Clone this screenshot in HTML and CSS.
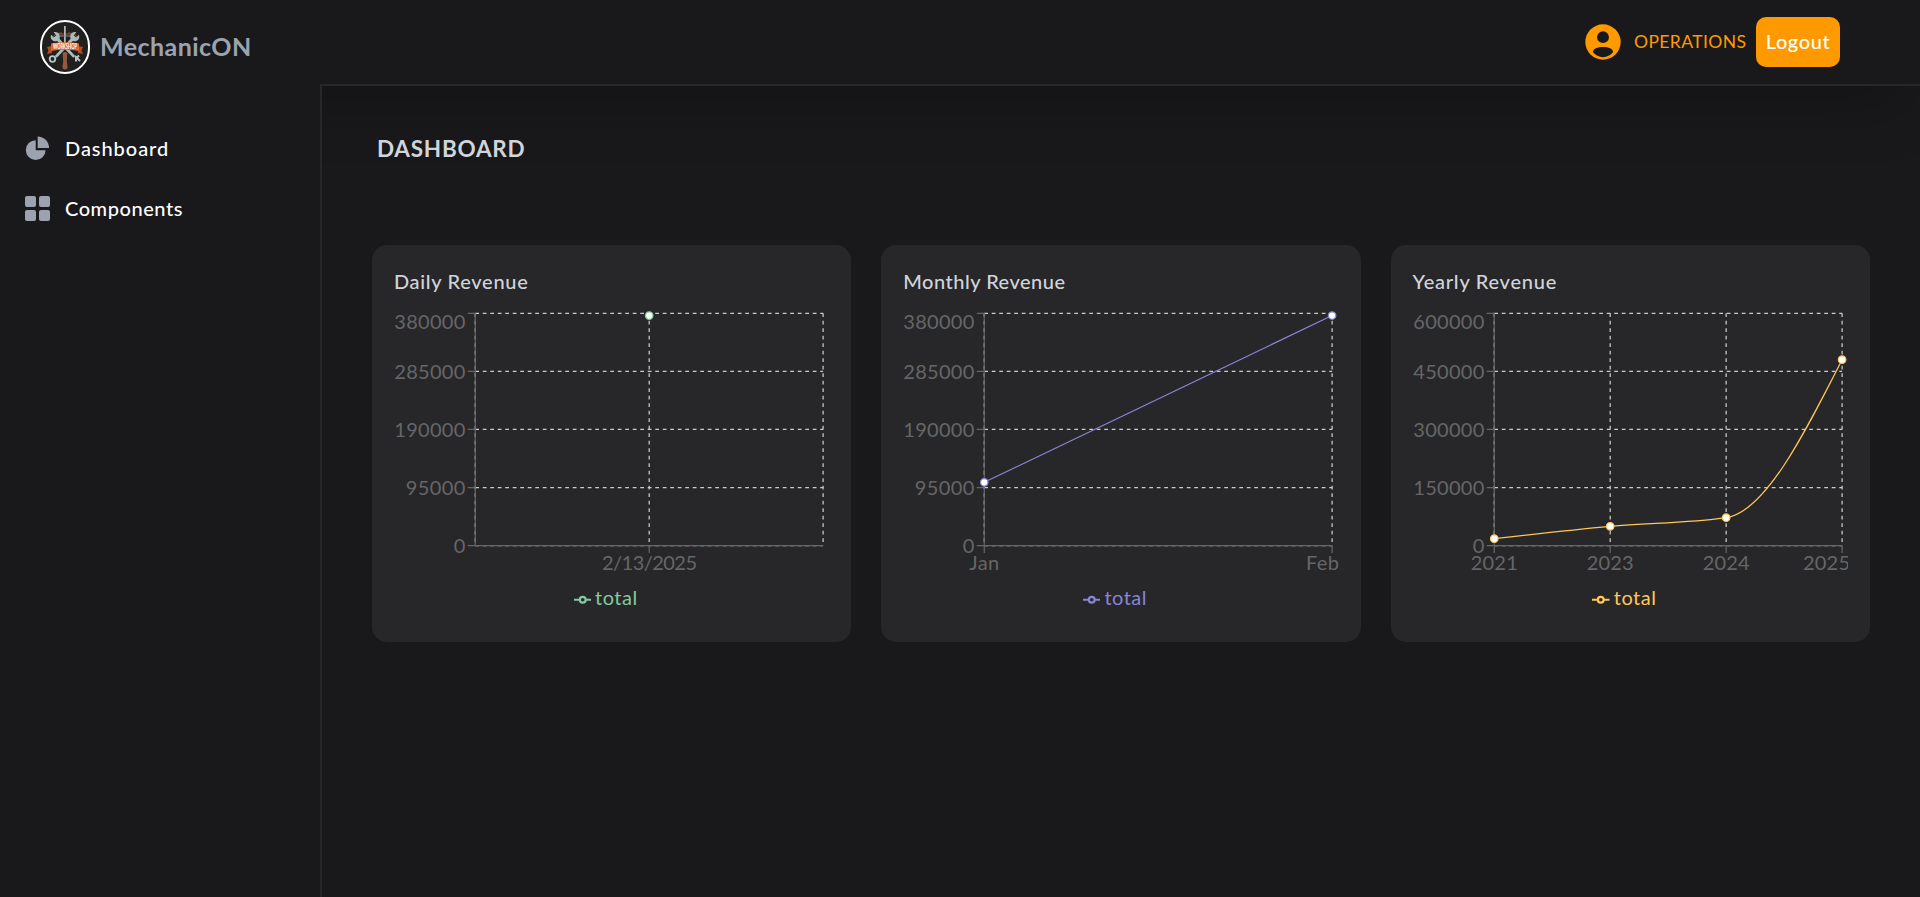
FILE: index.html
```html
<!DOCTYPE html>
<html lang="en">
<head>
<meta charset="utf-8">
<title>MechanicON</title>
<link rel="stylesheet" href="styles.css">
</head>
<body>
<svg class="defs" width="0" height="0">
  <defs>
    <g id="grid-rows">
      <path class="grid" d="M81.25 6.25H429.1M81.25 64.35H429.1M81.25 122.4H429.1M81.25 180.5H429.1M81.25 238.6H429.1"/>
      <path class="grid" d="M81.25 6.25V238.6M429.1 6.25V238.6"/>
    </g>
    <path id="axes" class="axis" d="M81.25 6.25V238.6M81.25 238.6H429.1M73.75 6.25h7.5M73.75 64.35h7.5M73.75 122.4h7.5M73.75 180.5h7.5M73.75 238.6h7.5"/>
    <path id="legend-mark" d="M0 16H10.667A5.333 5.333 0 1 1 21.333 16H32M21.333 16A5.333 5.333 0 1 1 10.667 16" fill="none" stroke="currentColor" stroke-width="4"/>
    <g id="wrench">
      <path d="M-1.6 -11.5L-1.4 13.5H1.4L1.6 -11.5Z"/>
      <path d="M-1.7 -18.5C-5.4 -17 -5.6 -11.8 -1.8 -10H1.8C5.6 -11.8 5.4 -17 1.7 -18.5V-14.6H-1.7Z"/>
    </g>
  </defs>
</svg>
<div class="layout">
  <header class="header">
    <div class="brand">
      <svg class="logo" viewBox="0 0 50 54">
        <rect x="1" y="1" width="48" height="52" rx="24" ry="25" fill="#20211f" stroke="#fff" stroke-width="2"/>
        <path d="M12 18q3 -5 10 -5M38 18q-3 -5 -10 -5M16 14h18" fill="none" stroke="#a4502d" stroke-width="1"/>
        <g fill="#a9bbbd">
          <use href="#wrench" transform="translate(25 27) rotate(-43)"/>
          <use href="#wrench" transform="translate(25 27) rotate(43)"/>
        </g>
        <circle cx="12.5" cy="39" r="2.8" fill="none" stroke="#b5c4c5" stroke-width="1.8"/>
        <path d="M35 36l5 5M36 41.500v-3l3 -3" fill="none" stroke="#b5c4c5" stroke-width="2"/>
        <path d="M24.100 6h1.600v18h-1.600z" fill="#c0c7c7"/>
        <path d="M20 16h10" stroke="#83908f" stroke-width="1"/>
        <path d="M22.600 33q2.400 -2 4.800 0l-.6 8l.8 7q-2.600 3 -5.200 0l.8 -7z" fill="#96583f"/>
        <path d="M7 27l5 -1v7l-5 1l1.500 -3.500zM43 27l-5 -1v7l5 1l-1.500 -3.500z" fill="#b64b20"/>
        <path d="M11 23.500q14 -2.500 28 0v7.500q-14 -2.500 -28 0z" fill="#dc6837"/>
        <text x="25" y="29.200" text-anchor="middle" textLength="24" lengthAdjust="spacingAndGlyphs" class="logo-text">WORKSHOP</text>
      </svg>
      <span class="brand-name">MechanicON</span>
    </div>
    <div class="user">
      <svg class="avatar" viewBox="0 0 36 36">
        <circle cx="18" cy="18" r="17.700" fill="#ff9900"/>
        <circle cx="18" cy="13.200" r="5.900" fill="#19191b"/>
        <path d="M8 28.300C8 24.500 12.500 23 18 23S28 24.500 28 28.300C25.500 31.300 22 33.200 18 33.200S10.500 31.300 8 28.300Z" fill="#19191b"/>
      </svg>
      <span class="role">OPERATIONS</span>
      <button class="logout">Logout</button>
    </div>
  </header>
  <nav class="sidebar">
    <a class="nav-item">
      <svg class="nav-icon" viewBox="0 0 25 25">
        <path d="M10.700 4.200V14.300H20.600A9.900 9.900 0 1 1 10.700 4.200Z" fill="#9ca3af"/>
        <path d="M12.700 .4A11.500 11.500 0 0 1 24 11.900H12.700Z" fill="#9ca3af"/>
      </svg>
      <span class="nav-label nav-dashboard">Dashboard</span>
    </a>
    <a class="nav-item">
      <svg class="nav-icon" viewBox="0 0 25 25" fill="#9ca3af">
        <rect width="11" height="11" rx="2"/><rect x="14" width="11" height="11" rx="2"/>
        <rect y="14" width="11" height="11" rx="2"/><rect x="14" y="14" width="11" height="11" rx="2"/>
      </svg>
      <span class="nav-label nav-components">Components</span>
    </a>
  </nav>
  <main class="content">
    <h1 class="page-title">DASHBOARD</h1>
    <div class="cards">
      <section class="card">
        <h2 class="card-title t-daily">Daily Revenue</h2>
        <svg class="chart" viewBox="0 0 435.5 270">
          <use href="#grid-rows"/><path class="grid" d="M255.200 6.250V238.600"/>
          <use href="#axes"/><path class="axis" d="M255.200 238.600v7.500"/>
          <g class="ylab"><text x="71.250" y="22.400" textLength="71">380000</text><text x="71.250" y="71.500" textLength="71">285000</text><text x="71.250" y="130" textLength="71">190000</text><text x="71.250" y="188" textLength="59.500">95000</text><text x="71.250" y="246" textLength="11.500">0</text></g>
          <g class="xlab"><text x="255.500" y="263" textLength="95">2/13/2025</text></g>
          <circle class="dot" cx="255.200" cy="8.600" r="3.750" stroke="#82ca9d"/>
        </svg>
        <div class="legend green"><svg class="mark" viewBox="0 0 32 32"><use href="#legend-mark"/></svg><span class="legend-text">total</span></div>
      </section>
      <section class="card">
        <h2 class="card-title t-monthly">Monthly Revenue</h2>
        <svg class="chart" viewBox="0 0 435.5 270">
          <use href="#grid-rows"/>
          <use href="#axes"/><path class="axis" d="M81.250 238.600v7.500M429.100 238.600v7.500"/>
          <g class="ylab"><text x="71.250" y="22.400" textLength="71">380000</text><text x="71.250" y="71.500" textLength="71">285000</text><text x="71.250" y="130" textLength="71">190000</text><text x="71.250" y="188" textLength="59.500">95000</text><text x="71.250" y="246" textLength="11.500">0</text></g>
          <g class="xlab"><text x="81.250" y="263" textLength="30">Jan</text><text x="419.500" y="263" textLength="33">Feb</text></g>
          <path class="line" d="M81.250 175.300L429.100 8.500" stroke="#8884d8"/>
          <g class="dot" stroke="#8884d8"><circle cx="81.250" cy="175.300" r="3.750"/><circle cx="429.100" cy="8.500" r="3.750"/></g>
        </svg>
        <div class="legend purple"><svg class="mark" viewBox="0 0 32 32"><use href="#legend-mark"/></svg><span class="legend-text">total</span></div>
      </section>
      <section class="card">
        <h2 class="card-title t-yearly">Yearly Revenue</h2>
        <svg class="chart" viewBox="0 0 435.5 270">
          <use href="#grid-rows"/><path class="grid" d="M197.200 6.250V238.600M313.150 6.250V238.600"/>
          <use href="#axes"/><path class="axis" d="M81.250 238.600v7.500M197.200 238.600v7.500M313.150 238.600v7.500M429.100 238.600v7.500"/>
          <g class="ylab"><text x="71.250" y="22.400" textLength="71">600000</text><text x="71.250" y="71.500" textLength="71">450000</text><text x="71.250" y="130" textLength="71">300000</text><text x="71.250" y="188" textLength="71">150000</text><text x="71.250" y="246" textLength="11.500">0</text></g>
          <g class="xlab"><text x="81.250" y="263" textLength="47">2021</text><text x="197.200" y="263" textLength="47">2023</text><text x="313.150" y="263" textLength="47">2024</text><text x="413.500" y="263" textLength="47">2025</text></g>
          <path class="line" d="M81.250 231.700C119.900 227.250 158.550 222.800 197.200 219.300C235.850 215.800 274.500 216.400 313.150 210.700C351.800 205 390.450 128.800 429.100 52.700" stroke="#ffc658"/>
          <g class="dot" stroke="#ffc658"><circle cx="81.250" cy="231.700" r="3.750"/><circle cx="197.200" cy="219.300" r="3.750"/><circle cx="313.150" cy="210.700" r="3.750"/><circle cx="429.100" cy="52.700" r="3.750"/></g>
        </svg>
        <div class="legend yellow"><svg class="mark" viewBox="0 0 32 32"><use href="#legend-mark"/></svg><span class="legend-text">total</span></div>
      </section>
    </div>
  </main>
</div>
</body>
</html>
```
FILE: styles.css
```css
* { box-sizing: border-box; }
body {
  margin: 0;
  background: #19191b;
  color: #d1d5db;
  font-family: Lato, "Liberation Sans", sans-serif;
  font-size: 20px;
}
.defs { display: block; position: absolute; }
.layout {
  display: grid;
  grid-template-columns: 320px 1fr;
  grid-template-rows: 84px 1fr;
  height: 897px;
  overflow: hidden;
}
.header {
  grid-column: 1 / 3;
  display: flex;
  justify-content: space-between;
  align-items: flex-start;
  padding: 17px 80px 0 40px;
  box-shadow: 0 31px 62px -15px rgba(0, 0, 0, .25);
}
.brand { display: flex; align-items: center; gap: 10px; padding-top: 3px; }
.logo { width: 50px; height: 54px; display: block; }
.logo-text { font-size: 6.5px; font-weight: 700; fill: #fff; }
.brand-name { font-size: 25px; line-height: 30px; font-weight: 700; color: #9ca3af; letter-spacing: .45px; padding-bottom: 2px; }
.user { display: flex; align-items: center; height: 50px; }
.avatar { width: 36px; height: 36px; }
.role { color: #ff9900; font-size: 17.5px; margin-left: 13px; width: 122px; letter-spacing: .4px; padding-bottom: 2px; }
.logout {
  width: 84px;
  height: 50px;
  padding: 0 0 2px;
  border: 0;
  border-radius: 10px;
  background: #ff9900;
  color: #fff;
  font: 500 20px/30px Lato, "Liberation Sans", sans-serif;
  letter-spacing: .6px;
}
.sidebar {
  position: relative;
  display: flex;
  flex-direction: column;
  gap: 30px;
  padding: 49px 0 0 25px;
  background: #19191b;
}
.nav-item { display: flex; align-items: center; gap: 15px; height: 30px; color: #fff; }
.nav-icon { width: 25px; height: 25px; }
.nav-label { font-weight: 500; line-height: 30px; }
.nav-dashboard { letter-spacing: .95px; }
.nav-components { letter-spacing: .55px; }
.content {
  border-left: 2px solid #27272a;
  border-top: 2px solid #27272a;
  padding: 48px 50px 0;
}
.page-title { margin: 0 0 0 5px; font-size: 22.5px; line-height: 30px; font-weight: 700; letter-spacing: .75px; }
.cards { display: grid; grid-template-columns: repeat(3, 1fr); gap: 30px; margin-top: 81px; }
.card { height: 397px; padding: 21px 21.9px; border-radius: 15px; background: #27272a; }
.card-title { margin: 0; font-size: 20px; line-height: 30px; font-weight: 500; }
.t-daily { letter-spacing: .7px; }
.t-monthly { letter-spacing: .5px; }
.t-yearly { letter-spacing: .75px; }
.chart { display: block; width: 435.5px; height: 270px; margin-top: 11px; overflow: hidden; }
.grid { fill: none; stroke: #ccc; stroke-width: 1.25; stroke-dasharray: 3.75 3.75; }
.axis { fill: none; stroke: #666; stroke-width: 1.25; }
.line { fill: none; stroke-width: 1.25; }
.dot { fill: #fff; stroke-width: 1.25; }
.ylab, .xlab { fill: #666; font-size: 20px; }
.ylab { text-anchor: end; }
.xlab { text-anchor: middle; }
.legend { display: flex; align-items: center; justify-content: center; gap: 4px; height: 30px; margin: 5px 12px 0 0; }
.legend-text { letter-spacing: .5px; }
.mark { width: 17.5px; height: 17.5px; margin-top: 5px; }
.green { color: #82ca9d; }
.purple { color: #8884d8; }
.yellow { color: #ffc658; }
```
